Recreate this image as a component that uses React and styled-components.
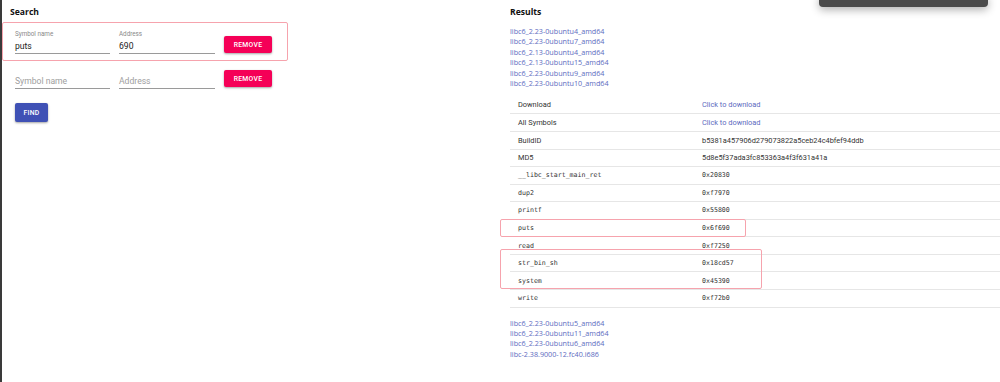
import React from "react";
import styled, { createGlobalStyle } from "styled-components";

const Global = createGlobalStyle`
  html, body { margin: 0; padding: 0; background: #fff; }
  body { font-family: Roboto, "Noto Sans", sans-serif; width: 1000px; height: 382px; overflow: hidden; }
  #root { height: 382px; }
`;

const Page = styled.div`
  display: flex;
  height: 382px;
  position: relative;
`;

const SideBar = styled.div`
  width: 2px;
  background: #3a3a3a;
  flex: none;
`;

const LeftCol = styled.section`
  width: 498px;
  flex: none;
  padding-top: 4px;
  box-sizing: border-box;
`;

const RightCol = styled.section`
  width: 500px;
  flex: none;
  padding: 4px 0 0 10px;
  box-sizing: border-box;
  position: relative;
`;

const Heading = styled.h2`
  margin: 0;
  font-family: "Open Sans", "Noto Sans", sans-serif;
  font-weight: 700;
  font-size: 8.6px;
  line-height: 16px;
  height: 16px;
  color: #111;
  padding-left: ${(p) => p.$indent || 0}px;
`;

const Row = styled.div`
  position: relative;
  height: 35px;
  display: flex;
  align-items: flex-end;
  gap: 9px;
  padding: 0 0 1px 13px;
  box-sizing: border-box;
  width: 286px;
`;

const Annotation = styled.div`
  position: absolute;
  border: 1px solid #f6a3ad;
  border-radius: 2px;
  box-sizing: border-box;
  pointer-events: none;
`;

const Field = styled.label`
  display: flex;
  flex-direction: column;
  width: ${(p) => p.$w}px;
`;

const FieldLabel = styled.span`
  font-size: 6.3px;
  line-height: 8px;
  color: #8a8a8a;
`;

const FieldInput = styled.div`
  height: 16px;
  display: flex;
  align-items: center;
  border-bottom: 1px solid #9a9a9a;
  box-sizing: border-box;
  font-size: 8.6px;
  color: ${(p) => (p.$placeholder ? "#9e9e9e" : "#222")};
`;

const Button = styled.button`
  border: none;
  border-radius: 2px;
  color: #fff;
  font-family: Roboto, sans-serif;
  font-weight: 500;
  font-size: 6.8px;
  letter-spacing: 0.3px;
  text-transform: uppercase;
  padding: 0;
  height: ${(p) => p.$h}px;
  width: ${(p) => p.$w}px;
  background: ${(p) => p.$bg};
  box-shadow: 0 1px 2px rgba(0, 0, 0, 0.25), 0 1px 3px rgba(0, 0, 0, 0.12);
  margin-bottom: ${(p) => p.$mb || 0}px;
  margin-top: ${(p) => p.$mt || 0}px;
  flex: none;
`;

const Actions = styled.div`
  padding-left: 13px;
  display: flex;
`;

const LinkList = styled.ul`
  list-style: none;
  margin: ${(p) => p.$mt}px 0 0;
  padding: 0;
`;

const LinkItem = styled.li`
  font-family: "Open Sans", "Noto Sans", sans-serif;
  font-size: 7.2px;
  line-height: 10.4px;
  color: #5c6bc0;
`;

const Table = styled.table`
  width: 490px;
  border-collapse: collapse;
  margin-top: 8px;
`;

const Tr = styled.tr`
  height: 17.55px;
  border-bottom: 1px solid #e6e6e6;
`;

const Td = styled.td`
  padding: 0 0 0 8px;
  width: ${(p) => p.$w || "auto"};
  font-family: ${(p) =>
    p.$mono ? '"DejaVu Sans Mono", "Liberation Mono", monospace' : "Roboto, sans-serif"};
  font-size: ${(p) => (p.$mono ? "6.6px" : "7.4px")};
  color: ${(p) => (p.$link ? "#5c6bc0" : "#333")};
  white-space: nowrap;
  vertical-align: middle;
`;

const Toast = styled.div`
  position: absolute;
  top: -6px;
  right: 12px;
  width: 169px;
  height: 13px;
  background: #4a4a4a;
  border-radius: 4px;
  box-shadow: 0 3px 8px rgba(0, 0, 0, 0.3);
`;

const topLinks = [
  "libc6_2.23-0ubuntu4_amd64",
  "libc6_2.23-0ubuntu7_amd64",
  "libc6_2.13-0ubuntu4_amd64",
  "libc6_2.13-0ubuntu15_amd64",
  "libc6_2.23-0ubuntu9_amd64",
  "libc6_2.23-0ubuntu10_amd64",
];

const bottomLinks = [
  "libc6_2.23-0ubuntu5_amd64",
  "libc6_2.23-0ubuntu11_amd64",
  "libc6_2.23-0ubuntu6_amd64",
  "libc-2.38.9000-12.fc40.i686",
];

const rows = [
  { k: "Download", v: "Click to download", link: true },
  { k: "All Symbols", v: "Click to download", link: true },
  { k: "BuildID", v: "b5381a457906d279073822a5ceb24c4bfef94ddb" },
  { k: "MD5", v: "5d8e5f37ada3fc853363a4f3f631a41a" },
  { k: "__libc_start_main_ret", v: "0x20830", mono: true },
  { k: "dup2", v: "0xf7970", mono: true },
  { k: "printf", v: "0x55800", mono: true },
  { k: "puts", v: "0x6f690", mono: true },
  { k: "read", v: "0xf7250", mono: true },
  { k: "str_bin_sh", v: "0x18cd57", mono: true },
  { k: "system", v: "0x45390", mono: true },
  { k: "write", v: "0xf72b0", mono: true },
];

export default function App() {
  return (
    <Page>
      <Global />
      <SideBar />
      <LeftCol>
        <Heading $indent={8}>Search</Heading>
        <Row>
          <Annotation style={{ top: 2, left: 0, width: 286, height: 39 }} />
          <Field $w={95}>
            <FieldLabel>Symbol name</FieldLabel>
            <FieldInput>puts</FieldInput>
          </Field>
          <Field $w={96}>
            <FieldLabel>Address</FieldLabel>
            <FieldInput>690</FieldInput>
          </Field>
          <Button $bg="#f50057" $w={48} $h={17} $mb={1}>
            Remove
          </Button>
        </Row>
        <Row>
          <Field $w={95}>
            <FieldInput $placeholder>Symbol name</FieldInput>
          </Field>
          <Field $w={96}>
            <FieldInput $placeholder>Address</FieldInput>
          </Field>
          <Button $bg="#f50057" $w={48} $h={17} $mb={2}>
            Remove
          </Button>
        </Row>
        <Actions>
          <Button $bg="#3f51b5" $w={33} $h={19} $mt={13}>
            Find
          </Button>
        </Actions>
      </LeftCol>
      <RightCol>
        <Heading>Results</Heading>
        <LinkList $mt={6}>
          {topLinks.map((l) => (
            <LinkItem key={l}>{l}</LinkItem>
          ))}
        </LinkList>
        <Table>
          <tbody>
            {rows.map((r) => (
              <Tr key={r.k}>
                <Td $w="176px" $mono={r.mono}>
                  {r.k}
                </Td>
                <Td $link={r.link} $mono={r.mono}>
                  {r.v}
                </Td>
              </Tr>
            ))}
          </tbody>
        </Table>
        <LinkList $mt={10}>
          {bottomLinks.map((l) => (
            <LinkItem key={l}>{l}</LinkItem>
          ))}
        </LinkList>
        <Annotation style={{ top: 219, left: 0, width: 246, height: 18 }} />
        <Annotation style={{ top: 249, left: 0, width: 262, height: 40 }} />
      </RightCol>
      <Toast />
    </Page>
  );
}
